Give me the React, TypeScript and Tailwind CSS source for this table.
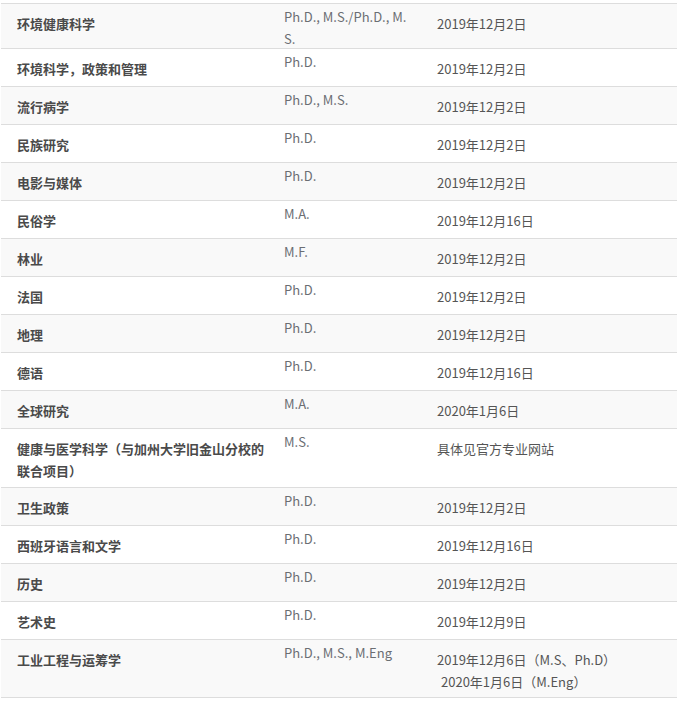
import React from 'react';

interface Row {
  name: React.ReactNode;
  degree: React.ReactNode;
  deadline: React.ReactNode;
  h: string;
}

const rows: Row[] = [
  { name: '环境健康科学', degree: <>Ph.D., M.S./Ph.D., M.<br />S.</>, deadline: '2019年12月2日', h: 'h-[45px]' },
  { name: '环境科学，政策和管理', degree: 'Ph.D.', deadline: '2019年12月2日', h: 'h-[38px]' },
  { name: '流行病学', degree: 'Ph.D., M.S.', deadline: '2019年12月2日', h: 'h-[38px]' },
  { name: '民族研究', degree: 'Ph.D.', deadline: '2019年12月2日', h: 'h-[38px]' },
  { name: '电影与媒体', degree: 'Ph.D.', deadline: '2019年12月2日', h: 'h-[38px]' },
  { name: '民俗学', degree: 'M.A.', deadline: '2019年12月16日', h: 'h-[38px]' },
  { name: '林业', degree: 'M.F.', deadline: '2019年12月2日', h: 'h-[38px]' },
  { name: '法国', degree: 'Ph.D.', deadline: '2019年12月2日', h: 'h-[38px]' },
  { name: '地理', degree: 'Ph.D.', deadline: '2019年12月2日', h: 'h-[38px]' },
  { name: '德语', degree: 'Ph.D.', deadline: '2019年12月16日', h: 'h-[38px]' },
  { name: '全球研究', degree: 'M.A.', deadline: '2020年1月6日', h: 'h-[38px]' },
  {
    name: <>健康与医学科学（与加州大学旧金山分校的<br />联合项目）</>,
    degree: 'M.S.',
    deadline: '具体见官方专业网站',
    h: 'h-[59px]',
  },
  { name: '卫生政策', degree: 'Ph.D.', deadline: '2019年12月2日', h: 'h-[38px]' },
  { name: '西班牙语言和文学', degree: 'Ph.D.', deadline: '2019年12月16日', h: 'h-[38px]' },
  { name: '历史', degree: 'Ph.D.', deadline: '2019年12月2日', h: 'h-[38px]' },
  { name: '艺术史', degree: 'Ph.D.', deadline: '2019年12月9日', h: 'h-[38px]' },
  {
    name: '工业工程与运筹学',
    degree: 'Ph.D., M.S., M.Eng',
    deadline: <>2019年12月6日（M.S、Ph.D）<br /><span className="pl-[4px]">2020年1月6日（M.Eng）</span></>,
    h: 'h-[58px]',
  },
];

const App: React.FC = () => {
  return (
    <div className="w-[683px] h-[702px] bg-white overflow-hidden pt-[3px] pl-px font-['Noto_Sans_CJK_SC',sans-serif] text-[13px]">
      <div className="w-[676px] border-b border-[#dddddd]">
        {rows.map((row, i) => (
          <div
            key={i}
            className={`flex border-t border-[#dddddd] ${row.h} ${i % 2 === 0 ? 'bg-[#f9f9f9]' : 'bg-white'}`}
          >
            {/* 专业 */}
            <div className="w-[266px] pl-[16px] pt-[9px] leading-[22px] font-bold text-[#4a4a4a] whitespace-nowrap">
              {row.name}
            </div>
            {/* 学位 */}
            <div className="w-[154px] pl-[17px] pt-[2px] leading-[22px] text-[#6b6e73] whitespace-nowrap">
              {row.degree}
            </div>
            {/* 截止日期 */}
            <div className="flex-1 pl-[16px] pt-[9px] leading-[22px] text-[#555555] whitespace-nowrap">
              {row.deadline}
            </div>
          </div>
        ))}
      </div>
    </div>
  );
};

export default App;
